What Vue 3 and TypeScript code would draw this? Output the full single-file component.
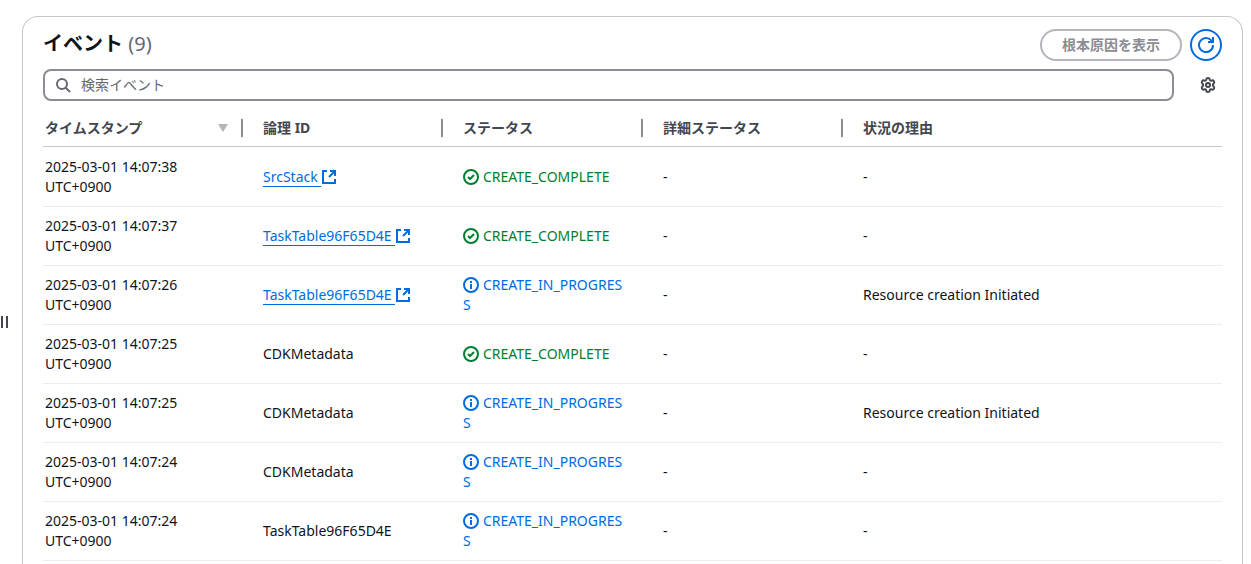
<script setup lang="ts">
import { ref } from 'vue'

type Status = 'CREATE_COMPLETE' | 'CREATE_IN_PROGRESS'

interface StackEvent {
  time: string
  id: string
  linked: boolean
  status: Status
  reason: string
}

const query = ref('')

const events: StackEvent[] = [
  { time: '14:07:38', id: 'SrcStack', linked: true, status: 'CREATE_COMPLETE', reason: '-' },
  { time: '14:07:37', id: 'TaskTable96F65D4E', linked: true, status: 'CREATE_COMPLETE', reason: '-' },
  { time: '14:07:26', id: 'TaskTable96F65D4E', linked: true, status: 'CREATE_IN_PROGRESS', reason: 'Resource creation Initiated' },
  { time: '14:07:25', id: 'CDKMetadata', linked: false, status: 'CREATE_COMPLETE', reason: '-' },
  { time: '14:07:25', id: 'CDKMetadata', linked: false, status: 'CREATE_IN_PROGRESS', reason: 'Resource creation Initiated' },
  { time: '14:07:24', id: 'CDKMetadata', linked: false, status: 'CREATE_IN_PROGRESS', reason: '-' },
  { time: '14:07:24', id: 'TaskTable96F65D4E', linked: false, status: 'CREATE_IN_PROGRESS', reason: '-' },
]
</script>

<template>
  <div class="page">
    <div class="splitter" role="separator" aria-orientation="vertical">
      <span class="grip"></span>
    </div>
    <main class="panel">
      <header class="head">
        <h2 class="title">イベント <span class="count">(9)</span></h2>
        <div class="actions">
          <button class="root-cause" type="button" disabled>根本原因を表示</button>
          <button class="refresh" type="button" aria-label="更新">
            <svg class="icon" viewBox="0 0 16 16" aria-hidden="true">
              <path d="M10 5h5V0" />
              <path d="M15 8a7 7 0 1 1-.7-3" />
            </svg>
          </button>
        </div>
      </header>

      <div class="tools">
        <label class="search">
          <svg class="icon" viewBox="0 0 16 16" aria-hidden="true">
            <circle cx="7" cy="7" r="5" />
            <path d="m15 15-4.500-4.500" />
          </svg>
          <input v-model="query" type="search" placeholder="検索イベント" aria-label="検索イベント" />
        </label>
        <button class="settings" type="button" aria-label="設定">
          <svg class="icon gear" viewBox="0 0 16 16" aria-hidden="true">
            <path d="M6.300 2.200Q6.500 1 8 1t1.700 1.200l.2.900q.4.700 1.200.6l.9-.3q1.200-.3 1.900.9t-.1 2.100l-.7.700q-.5.900 0 1.800l.7.700q.8.900.1 2.100t-1.900.9l-.9-.3q-.8-.1-1.200.6l-.2.900Q9.500 15 8 15t-1.700-1.200l-.2-.9q-.4-.7-1.200-.6l-.9.3q-1.200.3-1.900-.9t.1-2.100l.7-.7q.5-.9 0-1.800l-.7-.7q-.8-.9-.1-2.100T4 3.400l.9.3q.8.1 1.200-.6z" />
            <circle cx="8" cy="8" r="2" />
          </svg>
        </button>
      </div>

      <table class="events">
        <colgroup>
          <col class="fixed" />
          <col class="fixed" />
          <col class="fixed" />
          <col class="fixed" />
          <col />
        </colgroup>
        <thead>
          <tr>
            <th scope="col" aria-sort="descending">
              <div class="th">タイムスタンプ
                <svg class="sort" viewBox="0 0 10 8" aria-hidden="true"><path d="M0 0h10L5 8z" /></svg>
              </div>
            </th>
            <th scope="col"><div class="th">論理 ID</div></th>
            <th scope="col"><div class="th">ステータス</div></th>
            <th scope="col"><div class="th">詳細ステータス</div></th>
            <th scope="col"><div class="th">状況の理由</div></th>
          </tr>
        </thead>
        <tbody>
          <tr v-for="(e, i) in events" :key="i">
            <td class="stamp">2025-03-01 {{ e.time }} UTC+0900</td>
            <td>
              <a v-if="e.linked" class="link" href="#"><span class="name">{{ e.id }}&nbsp;</span><svg class="icon" viewBox="0 0 16 16" aria-hidden="true">
                <path d="M9 2h5v5" />
                <path d="m8 8 6-6" />
                <path d="M14 10v4H2V2h4" />
              </svg></a>
              <template v-else>{{ e.id }}</template>
            </td>
            <td class="status" :class="e.status === 'CREATE_COMPLETE' ? 'done' : 'progress'">
              <svg class="icon" viewBox="0 0 16 16" aria-hidden="true">
                <circle cx="8" cy="8" r="7" />
                <path v-if="e.status === 'CREATE_COMPLETE'" d="m5 8 2 2 4-4" />
                <path v-else d="M8 12V7M8 6V4" />
              </svg>{{ e.status }}
            </td>
            <td>-</td>
            <td>{{ e.reason }}</td>
          </tr>
        </tbody>
      </table>
    </main>
  </div>
</template>

<style>
body {
  margin: 0;
  background: #fff;
}
</style>

<style scoped>
.page {
  display: flex;
  box-sizing: border-box;
  min-height: 100vh;
  padding: 16px 8px 0 0;
  font: 14px/20px "Noto Sans", "Noto Sans CJK JP", sans-serif;
  color: #0f141a;
}

.icon {
  width: 16px;
  height: 16px;
  fill: none;
  stroke: currentColor;
  stroke-width: 2;
}

.splitter {
  display: flex;
  align-items: center;
  flex: none;
  box-sizing: border-box;
  width: 22px;
  padding: 64px 0 0 1px;
}

.grip {
  box-sizing: border-box;
  width: 7px;
  height: 12px;
  border: solid #424650;
  border-width: 0 2px;
}

.panel {
  flex: 1;
  min-width: 0;
  padding: 12px 20px 0;
  border: 1px solid #c6c6cd;
  border-bottom: 0;
  border-radius: 16px 16px 0 0;
}

.head {
  display: flex;
  justify-content: space-between;
  align-items: flex-start;
}

.title {
  margin: 0;
  font-size: 20px;
  line-height: 30px;
  font-weight: 700;
}

.count {
  font-weight: 400;
  color: #656871;
}

.actions {
  display: flex;
  gap: 8px;
}

button {
  display: flex;
  align-items: center;
  justify-content: center;
  box-sizing: border-box;
  height: 32px;
  padding: 0;
  border: 0;
  background: none;
  font: inherit;
}

.root-cause {
  padding: 0 20px;
  border: 2px solid #b4b4bb;
  border-radius: 16px;
  color: #8c8c94;
  font-weight: 700;
}

.refresh {
  width: 32px;
  border: 2px solid #006ce0;
  border-radius: 50%;
  color: #006ce0;
}

.tools {
  display: flex;
  gap: 20px;
  margin-top: 8px;
}

.search {
  display: flex;
  align-items: center;
  flex: 1;
  gap: 10px;
  box-sizing: border-box;
  height: 32px;
  padding: 0 10px;
  border: 2px solid #8c8c94;
  border-radius: 8px;
  color: #656871;
}

.search input {
  flex: 1;
  min-width: 0;
  padding: 0;
  border: 0;
  outline: 0;
  background: none;
  font: inherit;
  color: #0f141a;
}

.search input::placeholder {
  color: #656871;
  opacity: 1;
}

.settings {
  width: 28px;
  color: #424650;
}

.gear {
  stroke-linejoin: round;
}

.events {
  width: 100%;
  margin-top: 8px;
  table-layout: fixed;
  border-collapse: separate;
  border-spacing: 0;
}

.fixed {
  width: 200px;
}

th {
  padding: 10px 0 9px;
  border-bottom: 1px solid #c6c6cd;
  text-align: left;
  font-weight: 700;
  color: #424650;
}

.th {
  display: flex;
  align-items: center;
  justify-content: space-between;
  height: 18px;
  padding: 0 13px 0 20px;
}

th:not(:last-child) .th {
  border-right: 2px solid #8c8c94;
}

th:first-child .th {
  padding-left: 2px;
}

.sort {
  width: 10px;
  height: 8px;
  fill: #b4b4bb;
}

td {
  padding: 9px 20px;
  border-bottom: 1px solid #ebebf0;
  vertical-align: middle;
  word-break: break-word;
}

tbody tr:first-child td {
  padding-top: 10px;
}

.stamp {
  padding-left: 2px;
}

.link {
  color: #006ce0;
  text-decoration: none;
  white-space: nowrap;
}

.name {
  border-bottom: 1px solid #006ce0;
}

.link .icon,
.status .icon {
  vertical-align: -3px;
}

.status {
  padding-right: 18px;
  word-break: break-all;
}

.status .icon {
  margin-right: 4px;
}

.done {
  color: #00802f;
}

.progress {
  color: #006ce0;
}
</style>
